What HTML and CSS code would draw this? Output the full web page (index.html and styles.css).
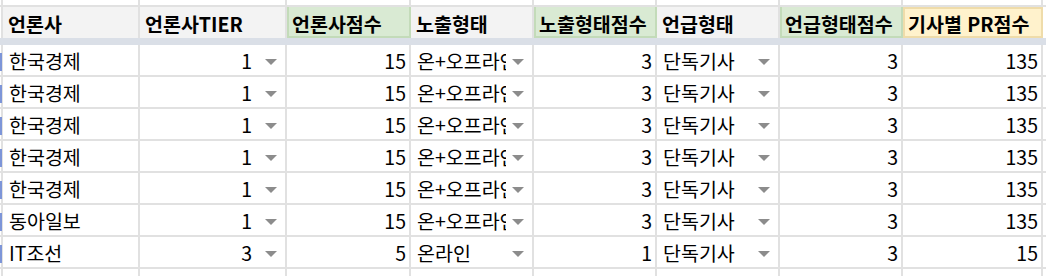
FILE: index.html
```html
<!DOCTYPE html>
<html lang="ko">
<head>
<meta charset="utf-8">
<link rel="stylesheet" href="styles.css">
</head>
<body>
<div class="sheet">
  <div class="cell top gut"></div>
  <div class="cell top"></div><div class="cell top"></div><div class="cell top"></div><div class="cell top"></div>
  <div class="cell top"></div><div class="cell top"></div><div class="cell top"></div><div class="cell top"></div>
  <div class="cell top fill"></div>

  <div class="cell head gut"></div>
  <div class="cell head">언론사</div>
  <div class="cell head">언론사TIER</div>
  <div class="cell head green">언론사점수</div>
  <div class="cell head">노출형태</div>
  <div class="cell head green">노출형태점수</div>
  <div class="cell head">언급형태</div>
  <div class="cell head green">언급형태점수</div>
  <div class="cell head yellow">기사별 PR점수</div>
  <div class="cell head fill"></div>

  <div class="band"></div>

  <div class="cell gut"><span class="mark"></span></div>
  <div class="cell txt">한국경제</div>
  <div class="cell dd num"><span class="val">1</span><span class="tri"></span></div>
  <div class="cell num">15</div>
  <div class="cell dd"><span class="val">온+오프라인</span><span class="tri"></span></div>
  <div class="cell num">3</div>
  <div class="cell dd"><span class="val">단독기사</span><span class="tri"></span></div>
  <div class="cell num">3</div>
  <div class="cell num">135</div>
  <div class="cell fill"></div>

  <div class="cell gut"><span class="mark"></span></div>
  <div class="cell txt">한국경제</div>
  <div class="cell dd num"><span class="val">1</span><span class="tri"></span></div>
  <div class="cell num">15</div>
  <div class="cell dd"><span class="val">온+오프라인</span><span class="tri"></span></div>
  <div class="cell num">3</div>
  <div class="cell dd"><span class="val">단독기사</span><span class="tri"></span></div>
  <div class="cell num">3</div>
  <div class="cell num">135</div>
  <div class="cell fill"></div>

  <div class="cell gut"><span class="mark"></span></div>
  <div class="cell txt">한국경제</div>
  <div class="cell dd num"><span class="val">1</span><span class="tri"></span></div>
  <div class="cell num">15</div>
  <div class="cell dd"><span class="val">온+오프라인</span><span class="tri"></span></div>
  <div class="cell num">3</div>
  <div class="cell dd"><span class="val">단독기사</span><span class="tri"></span></div>
  <div class="cell num">3</div>
  <div class="cell num">135</div>
  <div class="cell fill"></div>

  <div class="cell gut"><span class="mark"></span></div>
  <div class="cell txt">한국경제</div>
  <div class="cell dd num"><span class="val">1</span><span class="tri"></span></div>
  <div class="cell num">15</div>
  <div class="cell dd"><span class="val">온+오프라인</span><span class="tri"></span></div>
  <div class="cell num">3</div>
  <div class="cell dd"><span class="val">단독기사</span><span class="tri"></span></div>
  <div class="cell num">3</div>
  <div class="cell num">135</div>
  <div class="cell fill"></div>

  <div class="cell gut"><span class="mark"></span></div>
  <div class="cell txt">한국경제</div>
  <div class="cell dd num"><span class="val">1</span><span class="tri"></span></div>
  <div class="cell num">15</div>
  <div class="cell dd"><span class="val">온+오프라인</span><span class="tri"></span></div>
  <div class="cell num">3</div>
  <div class="cell dd"><span class="val">단독기사</span><span class="tri"></span></div>
  <div class="cell num">3</div>
  <div class="cell num">135</div>
  <div class="cell fill"></div>

  <div class="cell gut"><span class="mark"></span></div>
  <div class="cell txt">동아일보</div>
  <div class="cell dd num"><span class="val">1</span><span class="tri"></span></div>
  <div class="cell num">15</div>
  <div class="cell dd"><span class="val">온+오프라인</span><span class="tri"></span></div>
  <div class="cell num">3</div>
  <div class="cell dd"><span class="val">단독기사</span><span class="tri"></span></div>
  <div class="cell num">3</div>
  <div class="cell num">135</div>
  <div class="cell fill"></div>

  <div class="cell gut"><span class="mark"></span></div>
  <div class="cell txt">IT조선</div>
  <div class="cell dd num"><span class="val">3</span><span class="tri"></span></div>
  <div class="cell num">5</div>
  <div class="cell dd"><span class="val">온라인</span><span class="tri"></span></div>
  <div class="cell num">1</div>
  <div class="cell dd"><span class="val">단독기사</span><span class="tri"></span></div>
  <div class="cell num">3</div>
  <div class="cell num">15</div>
  <div class="cell fill"></div>

  <div class="cell gut"></div>
  <div class="cell"></div><div class="cell"></div><div class="cell"></div><div class="cell"></div>
  <div class="cell"></div><div class="cell"></div><div class="cell"></div><div class="cell"></div>
  <div class="cell fill"></div>
</div>
</body>
</html>
```

FILE: styles.css
```css
html, body {
  margin: 0;
  padding: 0;
  background: #ffffff;
  overflow: hidden;
}

body {
  font-family: "Noto Sans CJK KR", "Noto Sans", sans-serif;
  font-size: 19.5px;
  color: #000000;
}

.sheet {
  display: grid;
  grid-template-columns: 3px 137px 147px 124px 123px 123px 123px 123px 140px 1fr;
  grid-template-rows: 7px 31px 7px repeat(7, 32px) 32px;
  width: 1046px;
}

.cell {
  box-sizing: border-box;
  border-right: 2px solid #e1e1e1;
  border-bottom: 2px solid #e1e1e1;
  display: flex;
  align-items: center;
  padding: 0 6px;
  white-space: nowrap;
  overflow: hidden;
  line-height: 26px;
  min-width: 0;
}

.cell.gut {
  padding: 0;
  position: relative;
  overflow: visible;
}

.cell.fill {
  border-right: none;
  padding: 0;
}

.cell.head {
  border-bottom: none;
  background: #f3f3f3;
  font-weight: 700;
  padding-top: 2px;
  padding-left: 5px;
}

.cell.head.gut,
.cell.head.fill {
  background: #ffffff;
  padding: 0;
}

.cell.head.green {
  background: #d9ead3;
  border-right-color: #c3dbb9;
  box-shadow: inset 2px 0 0 #c3dbb9, inset 0 -2px 0 #c3dbb9;
}

.cell.head.yellow {
  background: #fff2cc;
  border-right-color: #efdcaa;
  box-shadow: inset 2px 0 0 #efdcaa, inset 0 2px 0 #efdcaa, inset 0 -2px 0 #efdcaa;
}

.band {
  grid-column: 1 / -1;
  background: #dadfe7;
}

.cell.num {
  justify-content: flex-end;
  padding-right: 3px;
}

.cell.dd {
  padding-right: 8px;
  justify-content: flex-start;
}

.cell.dd .val {
  flex: 1;
  min-width: 0;
  overflow: hidden;
}

.cell.dd.num .val {
  text-align: right;
  padding-right: 7px;
}

.tri {
  flex: none;
  width: 0;
  height: 0;
  margin-left: 6px;
  border-left: 6px solid transparent;
  border-right: 6px solid transparent;
  border-top: 6px solid #8c8c8c;
  margin-top: 1px;
}

.cell.txt,
.cell.dd,
.cell.num {
  padding-top: 2px;
}

.mark {
  position: absolute;
  left: 0;
  top: 8px;
  width: 2px;
  height: 18px;
  background: #7d95d8;
}
```
